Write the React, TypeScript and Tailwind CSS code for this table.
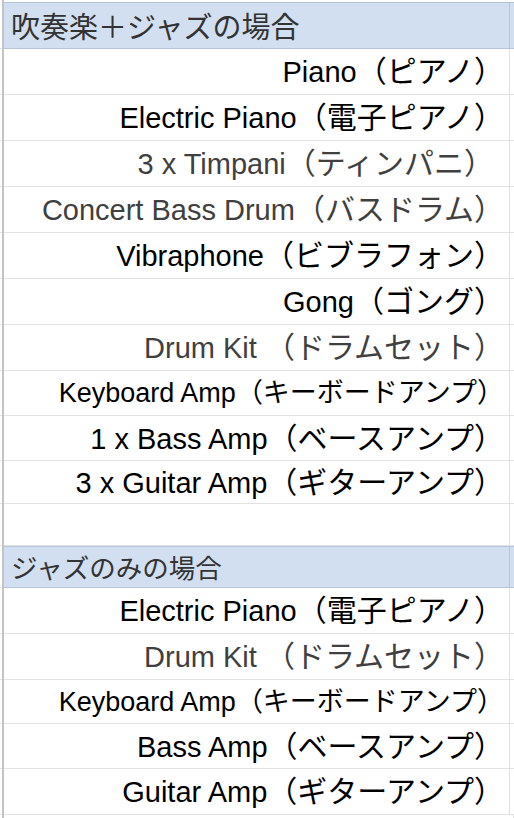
import React from 'react';

type Row = {
    kind: 'head' | 'item' | 'blank';
    en?: string;
    ja?: string;
    h: string;
    small?: boolean;
    muted?: boolean;
    pad?: string;
};

const rows: Row[] = [
    { kind: 'head', ja: '吹奏楽＋ジャズの場合', h: 'h-[47px]' },
    { kind: 'item', en: 'Piano', ja: '（ピアノ）', h: 'h-[46px]' },
    { kind: 'item', en: 'Electric Piano', ja: '（電子ピアノ）', h: 'h-[46px]' },
    { kind: 'item', en: '3 x Timpani', ja: '（ティンパニ）', h: 'h-[46px]', muted: true, pad: 'pr-[15px]' },
    { kind: 'item', en: 'Concert Bass Drum', ja: '（バスドラム）', h: 'h-[46px]', muted: true },
    { kind: 'item', en: 'Vibraphone', ja: '（ビブラフォン）', h: 'h-[46px]' },
    { kind: 'item', en: 'Gong', ja: '（ゴング）', h: 'h-[46px]' },
    { kind: 'item', en: 'Drum Kit ', ja: '（ドラムセット）', h: 'h-[46px]', muted: true },
    { kind: 'item', en: 'Keyboard Amp', ja: '（キーボードアンプ）', h: 'h-[45px]', small: true },
    { kind: 'item', en: '1 x Bass Amp', ja: '（ベースアンプ）', h: 'h-[45px]' },
    { kind: 'item', en: '3 x Guitar Amp', ja: '（ギターアンプ）', h: 'h-[43px]' },
    { kind: 'blank', h: 'h-[42px]' },
    { kind: 'head', ja: 'ジャズのみの場合', h: 'h-[42px]', small: true },
    { kind: 'item', en: 'Electric Piano', ja: '（電子ピアノ）', h: 'h-[46px]' },
    { kind: 'item', en: 'Drum Kit ', ja: '（ドラムセット）', h: 'h-[46px]', muted: true },
    { kind: 'item', en: 'Keyboard Amp', ja: '（キーボードアンプ）', h: 'h-[44px]', small: true },
    { kind: 'item', en: 'Bass Amp', ja: '（ベースアンプ）', h: 'h-[45px]' },
    { kind: 'item', en: 'Guitar Amp', ja: '（ギターアンプ）', h: 'h-[46px]' },
];

const latin = { fontFamily: '"Liberation Sans", Arial, sans-serif' };
const cjk = { fontFamily: '"Noto Sans CJK JP", "Noto Sans", sans-serif' };

const SheetRow: React.FC<{ row: Row }> = ({ row }) => {
    if (row.kind === 'head') {
        return (
            <div className={`flex ${row.h} shrink-0`}>
                <div className="w-[2px] border-b border-[#e2e2e2]" />
                <div className="w-[2px] bg-[#c4c4c4]" />
                <div className="flex-1 flex border-t border-b border-[#b7c5d9] bg-[#d2dff0]">
                    <div
                        className={`flex-1 flex items-center pl-[7px] border-r border-[#b7c5d9] text-[#333] ${row.small ? 'text-[26.5px]' : 'text-[29px]'}`}
                        style={cjk}
                    >
                        {row.ja}
                    </div>
                    <div className="w-[4px]" />
                </div>
            </div>
        );
    }

    return (
        <div className={`flex ${row.h} shrink-0`}>
            <div className="w-[2px] border-b border-[#e2e2e2]" />
            <div className="w-[2px] bg-[#c4c4c4]" />
            <div
                className={`flex-1 flex items-center justify-end pb-[2px] border-b border-r border-[#e2e2e2] whitespace-pre ${row.pad ?? 'pr-[5px]'} ${row.muted ? 'text-[#404040]' : 'text-black'}`}
            >
                {row.en && (
                    <span className="flex items-baseline">
                        <span className={row.small ? 'text-[27px]' : 'text-[29px]'} style={latin}>
                            {row.en}
                        </span>
                        <span className={row.small ? 'text-[27px]' : 'text-[30px]'} style={cjk}>
                            {row.ja}
                        </span>
                    </span>
                )}
            </div>
            <div className="w-[4px] border-b border-[#e2e2e2]" />
        </div>
    );
};

export default function App() {
    return (
        <div className="w-[514px] h-[818px] bg-white overflow-hidden flex flex-col leading-none">
            <div className="flex h-[2px] shrink-0">
                <div className="w-[2px]" />
                <div className="w-[2px] bg-[#c4c4c4]" />
            </div>
            {rows.map((row, i) => (
                <SheetRow key={i} row={row} />
            ))}
            <div className="flex flex-1">
                <div className="w-[2px]" />
                <div className="w-[2px] bg-[#c4c4c4]" />
                <div className="flex-1 border-r border-[#e2e2e2]" />
            </div>
        </div>
    );
}
